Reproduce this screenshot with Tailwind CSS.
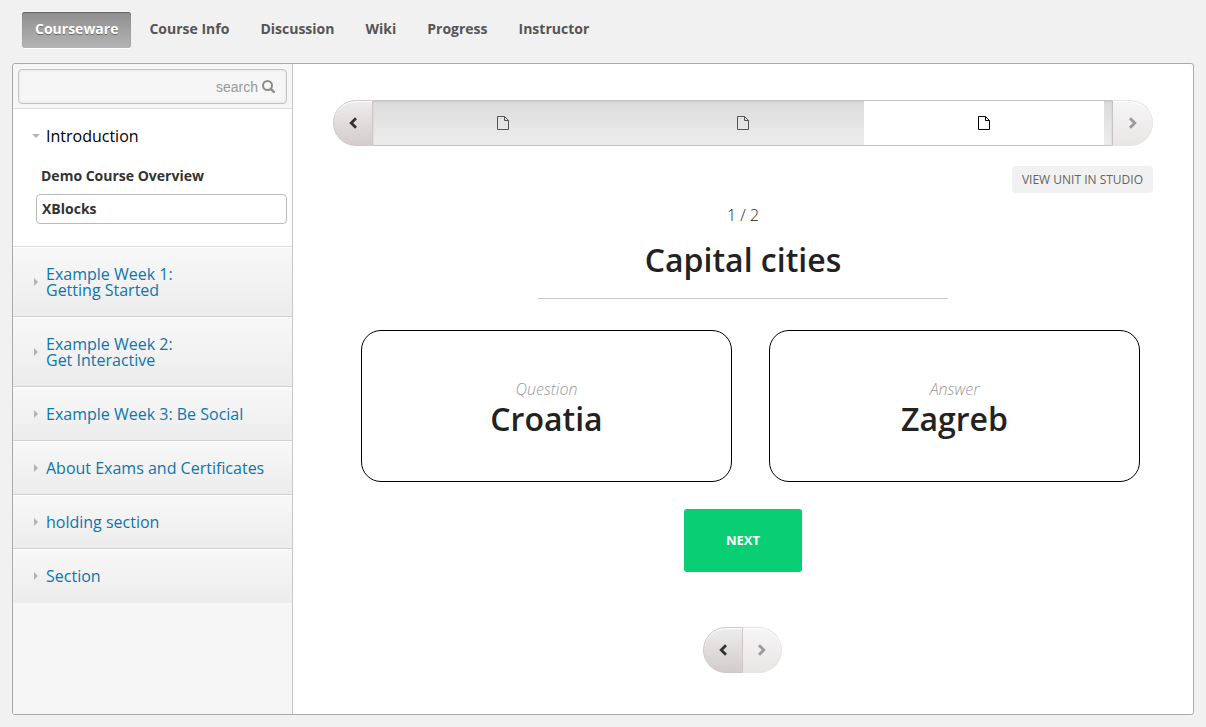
<!DOCTYPE html>
<html lang="en">
<head>
<meta charset="utf-8">
<meta name="viewport" content="width=device-width, initial-scale=1">
<title>XBlocks | Courseware</title>
<script src="https://cdn.jsdelivr.net/npm/@tailwindcss/browser@4"></script>
</head>
<body class="flex min-h-screen flex-col bg-[#f1f1f1] font-['Open_Sans',sans-serif] text-[#222]">
<nav aria-label="Course" class="flex gap-[5px] px-[22px] pt-3 text-sm font-bold text-[#555]">
  <a href="#" aria-current="page" class="flex h-9 items-center rounded-[3px] bg-linear-to-b from-[#8f8f8f] to-[#b4b4b4] px-[13px] text-white shadow-[inset_0_1px_1px_#666,0_1px_0_#fff] text-shadow-[0_1px_0_#666]"><span class="pb-0.5">Courseware</span></a>
  <a href="#" class="flex h-9 items-center px-[13px] pb-0.5">Course Info</a>
  <a href="#" class="flex h-9 items-center px-[13px] pb-0.5">Discussion</a>
  <a href="#" class="flex h-9 items-center px-[13px] pb-0.5">Wiki</a>
  <a href="#" class="flex h-9 items-center px-[13px] pb-0.5">Progress</a>
  <a href="#" class="flex h-9 items-center px-[13px] pb-0.5">Instructor</a>
</nav>

<div class="mx-3 mt-[15px] mb-3 flex grow rounded-[3px] border border-[#aaa] bg-white">
  <aside class="w-[280px] shrink-0 rounded-l-sm border-r border-[#c8c8c8] bg-[#f6f6f6]">
    <form class="border-b border-[#ddd] p-[5px] pb-1" role="search">
      <div class="flex h-[35px] items-center gap-1 rounded border border-[#c4c4c4] bg-[#f6f6f6] pr-[11px] pl-2 shadow-[inset_0_0_3px_#ddd]">
        <input type="text" aria-label="Search" placeholder="search" class="min-w-0 grow bg-transparent text-right font-['Liberation_Sans',sans-serif] text-sm text-[#555] outline-none placeholder:text-[#999]">
        <button type="submit" aria-label="Submit search" class="text-[#8c8c8c]">
          <svg class="size-[13px]" viewBox="0 0 13 13" fill="none" stroke="currentColor" stroke-width="2"><circle cx="5.5" cy="5.5" r="4.5"/><path d="M8.8 8.8 12 12" stroke-width="2.4" stroke-linecap="round"/></svg>
        </button>
      </div>
    </form>
    <section class="border-b border-[#ddd] bg-white pt-[19px] pb-[22px]">
      <h3><a href="#" class="flex items-center gap-1.5 pl-[19px] text-base leading-4 text-black"><svg class="h-1 w-2" viewBox="0 0 8 4" fill="#b3b3b3"><path d="M0 0h8L4 4z"/></svg>Introduction</a></h3>
      <ul class="mt-[18px] mr-[5px] ml-[23px] text-sm font-bold text-[#333]">
        <li><a href="#" class="flex h-7 items-center px-[5px]">Demo Course Overview</a></li>
        <li><a href="#" class="mt-1 flex h-[30px] items-center rounded border border-[#bbb] px-[5px]">XBlocks</a></li>
      </ul>
    </section>
    <ul class="text-base leading-4 text-[#0d76ad]">
      <li><a href="#" class="flex h-[70px] items-center gap-2 border-b border-[#d0d0d0] bg-linear-to-b from-[#f8f8f8] to-[#ececec] pl-[21px] shadow-[inset_0_1px_0_#fff]"><svg class="h-2 w-1 shrink-0" viewBox="0 0 4 8" fill="#b3b3b3"><path d="M0 0v8l4-4z"/></svg><span>Example Week 1:<br>Getting Started</span></a></li>
      <li><a href="#" class="flex h-[70px] items-center gap-2 border-b border-[#d0d0d0] bg-linear-to-b from-[#f8f8f8] to-[#ececec] pl-[21px] shadow-[inset_0_1px_0_#fff]"><svg class="h-2 w-1 shrink-0" viewBox="0 0 4 8" fill="#b3b3b3"><path d="M0 0v8l4-4z"/></svg><span>Example Week 2:<br>Get Interactive</span></a></li>
      <li><a href="#" class="flex h-[54px] items-center gap-2 border-b border-[#d0d0d0] bg-linear-to-b from-[#f8f8f8] to-[#ececec] pl-[21px] shadow-[inset_0_1px_0_#fff]"><svg class="h-2 w-1 shrink-0" viewBox="0 0 4 8" fill="#b3b3b3"><path d="M0 0v8l4-4z"/></svg><span>Example Week 3: Be Social</span></a></li>
      <li><a href="#" class="flex h-[54px] items-center gap-2 border-b border-[#d0d0d0] bg-linear-to-b from-[#f8f8f8] to-[#ececec] pl-[21px] shadow-[inset_0_1px_0_#fff]"><svg class="h-2 w-1 shrink-0" viewBox="0 0 4 8" fill="#b3b3b3"><path d="M0 0v8l4-4z"/></svg><span>About Exams and Certificates</span></a></li>
      <li><a href="#" class="flex h-[54px] items-center gap-2 border-b border-[#d0d0d0] bg-linear-to-b from-[#f8f8f8] to-[#ececec] pl-[21px] shadow-[inset_0_1px_0_#fff]"><svg class="h-2 w-1 shrink-0" viewBox="0 0 4 8" fill="#b3b3b3"><path d="M0 0v8l4-4z"/></svg><span>holding section</span></a></li>
      <li><a href="#" class="flex h-[54px] items-center gap-2 bg-linear-to-b from-[#f8f8f8] to-[#ececec] pl-[21px] shadow-[inset_0_1px_0_#fff]"><svg class="h-2 w-1 shrink-0" viewBox="0 0 4 8" fill="#b3b3b3"><path d="M0 0v8l4-4z"/></svg><span>Section</span></a></li>
    </ul>
  </aside>

  <main class="flex min-w-0 grow flex-col px-10 pt-9 pb-10">
    <div class="flex h-[46px]">
      <button aria-label="Previous" class="flex w-10 shrink-0 items-center justify-center rounded-l-[23px] border border-[#cfc6c6] bg-linear-to-b from-[#ededed] to-[#d4cccc] text-[#333] shadow-[inset_0_1px_0_#fff]">
        <svg class="h-3 w-2" viewBox="0 0 8 12" fill="none" stroke="currentColor" stroke-width="2.8"><path d="M7 1.2 2.2 6 7 10.8"/></svg>
      </button>
      <div class="grid grow grid-cols-3 border-y border-[#c4c4c4] bg-linear-to-b from-[#dcdcdc] to-[#ededed] pr-2 pl-2.5 text-[#555] shadow-[inset_0_1px_2px_#c8c8c8]">
        <button aria-label="Unit 1" class="flex items-center justify-center"><svg class="h-3.5 w-3" viewBox="0 0 12 14" fill="none" stroke="currentColor"><path d="M.5.5h7l4 4v9H.5zM7.5.5v4h4"/></svg></button>
        <button aria-label="Unit 2" class="flex items-center justify-center"><svg class="h-3.5 w-3" viewBox="0 0 12 14" fill="none" stroke="currentColor"><path d="M.5.5h7l4 4v9H.5zM7.5.5v4h4"/></svg></button>
        <button aria-label="Unit 3" aria-current="true" class="flex items-center justify-center bg-white text-black"><svg class="h-3.5 w-3" viewBox="0 0 12 14" fill="none" stroke="currentColor"><path d="M.5.5h7l4 4v9H.5zM7.5.5v4h4"/></svg></button>
      </div>
      <button aria-label="Next unit" class="flex w-[41px] shrink-0 items-center justify-center rounded-r-[23px] border border-[#e6e3e3] border-l-[#c4c4c4] bg-linear-to-b from-[#f6f6f6] to-[#e9e5e5] text-[#999] shadow-[inset_0_1px_0_#fff]">
        <svg class="h-3 w-2" viewBox="0 0 8 12" fill="none" stroke="currentColor" stroke-width="2.8"><path d="M1 1.2 5.8 6 1 10.8"/></svg>
      </button>
    </div>

    <a href="#" class="mt-5 flex h-[27px] items-center self-end rounded bg-[#f1f1f1] px-2.5 text-xs text-[#646464]">VIEW UNIT IN STUDIO</a>

    <p class="mt-2.5 text-center text-base font-light text-[#222]">1 / 2</p>
    <h2 class="mt-[13px] text-center text-[32px] leading-10 font-semibold">Capital cities</h2>
    <hr class="mx-auto mt-[18px] w-1/2 border-[#c8c8c8]">

    <div class="mt-[31px] grid grid-cols-2 gap-[37px] pr-[13px] pl-7 text-center">
      <div class="flex h-[152px] flex-col items-center justify-center rounded-[20px] border border-black pt-1.5">
        <p class="text-base leading-5 font-light text-[#999] italic">Question</p>
        <p class="text-[32px] leading-10 font-semibold">Croatia</p>
      </div>
      <div class="flex h-[152px] flex-col items-center justify-center rounded-[20px] border border-black pt-1.5">
        <p class="text-base leading-5 font-light text-[#999] italic">Answer</p>
        <p class="text-[32px] leading-10 font-semibold">Zagreb</p>
      </div>
    </div>

    <button class="mx-auto mt-[27px] h-[63px] w-[118px] rounded-[3px] bg-[#0ace73] text-[13px] font-bold text-white">NEXT</button>

    <div class="mt-[55px] flex h-[46px] justify-center pr-0.5">
      <button aria-label="Previous" class="flex w-10 items-center justify-center rounded-l-[23px] border border-[#cfc6c6] bg-linear-to-b from-[#ededed] to-[#d4cccc] text-[#333] shadow-[inset_0_1px_0_#fff]">
        <svg class="h-3 w-2" viewBox="0 0 8 12" fill="none" stroke="currentColor" stroke-width="2.8"><path d="M7 1.2 2.2 6 7 10.8"/></svg>
      </button>
      <button aria-label="Next unit" class="flex w-[39px] items-center justify-center rounded-r-[23px] border border-l-0 border-[#e6e3e3] bg-linear-to-b from-[#f6f6f6] to-[#e9e5e5] text-[#999] shadow-[inset_0_1px_0_#fff]">
        <svg class="h-3 w-2" viewBox="0 0 8 12" fill="none" stroke="currentColor" stroke-width="2.8"><path d="M1 1.2 5.8 6 1 10.8"/></svg>
      </button>
    </div>
  </main>
</div>
</body>
</html>
